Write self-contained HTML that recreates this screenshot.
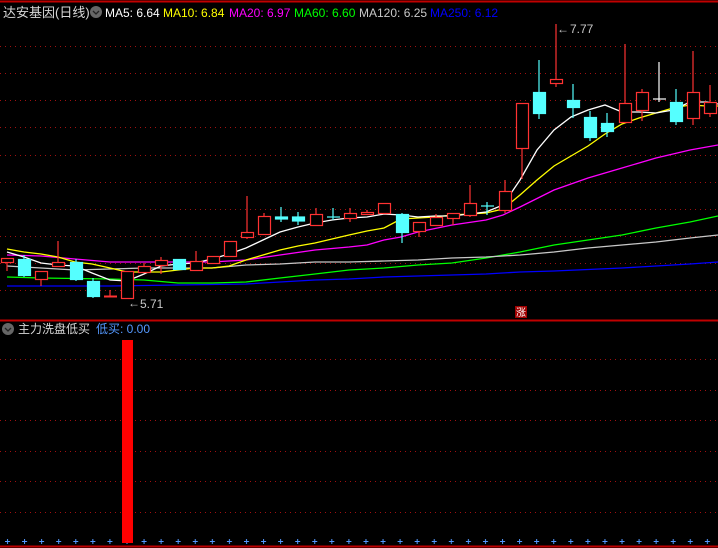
<!DOCTYPE html>
<html><head><meta charset="utf-8"><style>
html,body{margin:0;padding:0;background:#000;width:718px;height:548px;overflow:hidden}
svg{display:block}
text{font-family:"Liberation Sans","Noto Sans CJK SC",sans-serif}
</style></head><body>
<svg width="718" height="548" viewBox="0 0 718 548" xmlns="http://www.w3.org/2000/svg">
<defs>
<pattern id="plus" x="5" y="539" width="17.07" height="5" patternUnits="userSpaceOnUse">
<rect x="0" y="2" width="5" height="1" fill="#5599ff"/><rect x="2" y="0" width="1" height="5" fill="#5599ff"/>
</pattern>
</defs>
<rect width="718" height="548" fill="#000"/>
<line x1="0" y1="1.5" x2="718" y2="1.5" stroke="#c00000" stroke-width="2"/>
<g stroke="#a01010" stroke-width="1" stroke-dasharray="1,4">
<line x1="0" y1="46.5" x2="718" y2="46.5"/><line x1="0" y1="73.5" x2="718" y2="73.5"/>
<line x1="0" y1="100.5" x2="718" y2="100.5"/><line x1="0" y1="127.5" x2="718" y2="127.5"/>
<line x1="0" y1="155.5" x2="718" y2="155.5"/><line x1="0" y1="182.5" x2="718" y2="182.5"/>
<line x1="0" y1="209.5" x2="718" y2="209.5"/><line x1="0" y1="236.5" x2="718" y2="236.5"/>
<line x1="0" y1="263.5" x2="718" y2="263.5"/><line x1="0" y1="290.5" x2="718" y2="290.5"/>
<line x1="0" y1="359.5" x2="718" y2="359.5"/><line x1="0" y1="390.5" x2="718" y2="390.5"/>
<line x1="0" y1="420.5" x2="718" y2="420.5"/><line x1="0" y1="451.5" x2="718" y2="451.5"/>
<line x1="0" y1="481.5" x2="718" y2="481.5"/><line x1="0" y1="512.5" x2="718" y2="512.5"/>
</g>
<line x1="0" y1="320.5" x2="718" y2="320.5" stroke="#c00000" stroke-width="2"/>
<line x1="0" y1="546.5" x2="718" y2="546.5" stroke="#c00000" stroke-width="2"/>

<g fill="none" stroke-width="1.3">
<polyline stroke="#0000ff" points="7,286 41,286 110,286 178,285 246,284 280,282 315,280 349,279 384,277 452,275 486,274 520,272 554,271 622,268 690,264 718,262"/>
<polyline stroke="#00ff00" points="7,277 41,278 110,279 144,280 178,283 212,283 246,282 280,278 315,274 349,270 384,268 418,265 452,263 486,258 520,252 554,245 588,240 622,235 656,228 690,222 718,216"/>
<polyline stroke="#c8c8c8" points="7,266 41,268 75,270 110,269 144,268 178,268 212,268 246,265 280,264 315,262 349,262 384,261 418,260 452,258 486,257 520,255 554,252 588,248 622,245 656,242 690,238 718,235"/>
<polyline stroke="#ff00ff" points="7,255 41,256 75,259 110,262 144,262 178,262 212,262 246,260 280,255 315,250 349,247 367,245 384,240 401,237 418,232 452,225 486,220 503,215 520,207 554,190 588,178 622,168 656,158 690,150 718,145"/>
<polyline stroke="#ffff00" points="7,249 24,252 41,254 58,257 75,262 92,264 110,268 127,272 144,272 161,272 178,270 195,268 212,268 229,266 246,260 263,255 280,250 298,246 315,243 332,239 349,235 367,231 384,228 401,219 418,218 435,217 452,215 469,214 486,213 503,209 520,195 537,180 554,166 571,156 588,146 605,134 622,124 639,118 656,113 673,108 690,105 707,106 718,106"/>
<polyline stroke="#ffffff" points="7,252 24,257 41,263 58,265 75,266 92,273 110,280 127,281 144,274 161,266 178,264 195,263 212,259 229,254 246,248 263,240 280,232 298,227 315,223 332,220 349,218 367,217 384,214 401,215 418,217 435,216 452,216 469,214 486,212 503,205 520,180 537,150 554,130 571,117 588,110 605,105 622,112 639,112 656,113 673,110 690,102 707,102 718,104"/>
</g>

<g stroke-width="1.2">
<g stroke="#ff3232" fill="#000">
<line x1="7" y1="258" x2="7" y2="271"/><rect x="1.5" y="258.5" width="12" height="4"/>
<line x1="41" y1="279" x2="41" y2="286"/><rect x="35.5" y="271.5" width="12" height="8"/>
<line x1="58" y1="241" x2="58" y2="267"/><rect x="52.5" y="262.5" width="12" height="4"/>
<line x1="110" y1="290" x2="110" y2="297"/><line x1="104" y1="296.5" x2="117" y2="296.5" stroke-width="2"/>
<rect x="121.5" y="271.5" width="12" height="27"/>
<line x1="144" y1="263" x2="144" y2="272"/><rect x="138.5" y="266.5" width="12" height="6"/>
<line x1="161" y1="257" x2="161" y2="274"/><rect x="155.5" y="260.5" width="12" height="5"/>
<line x1="196" y1="251" x2="196" y2="271"/><rect x="190.5" y="261.5" width="12" height="9"/>
<rect x="207.5" y="256.5" width="12" height="7"/>
<rect x="224.5" y="241.5" width="12" height="15"/>
<line x1="247" y1="196" x2="247" y2="239"/><rect x="241.5" y="232.5" width="12" height="5"/>
<line x1="264" y1="213" x2="264" y2="234"/><rect x="258.5" y="216.5" width="12" height="18"/>
<line x1="316" y1="208" x2="316" y2="225"/><rect x="310.5" y="214.5" width="12" height="11"/>
<line x1="350" y1="208" x2="350" y2="222"/><rect x="344.5" y="213.5" width="12" height="5"/>
<line x1="367" y1="210" x2="367" y2="214"/><rect x="361.5" y="212.5" width="12" height="2"/>
<rect x="378.5" y="203.5" width="12" height="10"/>
<line x1="419" y1="231" x2="419" y2="237"/><rect x="413.5" y="222.5" width="12" height="9"/>
<line x1="436" y1="214" x2="436" y2="225"/><rect x="430.5" y="217.5" width="12" height="8"/>
<line x1="453" y1="214" x2="453" y2="225"/><rect x="447.5" y="213.5" width="12" height="5"/>
<line x1="470" y1="185" x2="470" y2="217"/><rect x="464.5" y="203.5" width="12" height="12"/>
<line x1="505" y1="180" x2="505" y2="213"/><rect x="499.5" y="191.5" width="12" height="19"/>
<line x1="522" y1="148" x2="522" y2="179"/><rect x="516.5" y="103.5" width="12" height="45"/>
<line x1="556" y1="24" x2="556" y2="87"/><rect x="550.5" y="79.5" width="12" height="4"/>
<line x1="625" y1="44" x2="625" y2="122"/><rect x="619.5" y="103.5" width="12" height="19"/>
<line x1="642" y1="89" x2="642" y2="121"/><rect x="636.5" y="92.5" width="12" height="18"/>
<line x1="693" y1="51" x2="693" y2="125"/><rect x="687.5" y="92.5" width="12" height="26"/>
<line x1="710" y1="85" x2="710" y2="117"/><rect x="704.5" y="102.5" width="12" height="11"/>
</g>
<g stroke="#55ffff" fill="#55ffff">
<line x1="24" y1="255" x2="24" y2="277"/><rect x="18.5" y="259.5" width="12" height="16"/>
<line x1="76" y1="259" x2="76" y2="281"/><rect x="70.5" y="262.5" width="12" height="17"/>
<line x1="93" y1="278" x2="93" y2="298"/><rect x="87.5" y="281.5" width="12" height="15"/>
<rect x="173.5" y="259.5" width="12" height="10"/>
<line x1="281" y1="207" x2="281" y2="222"/><rect x="275.5" y="217" width="12" height="2"/>
<line x1="298" y1="212" x2="298" y2="225"/><rect x="292.5" y="217" width="12" height="4"/>
<line x1="333" y1="208" x2="333" y2="220"/><line x1="327" y1="217" x2="340" y2="217"/>
<line x1="402" y1="213" x2="402" y2="243"/><rect x="396.5" y="214.5" width="12" height="18"/>
<line x1="487" y1="202" x2="487" y2="215"/><line x1="481" y1="206" x2="494" y2="206"/>
<line x1="539" y1="60" x2="539" y2="119"/><rect x="533.5" y="92.5" width="12" height="21"/>
<line x1="573" y1="84" x2="573" y2="118"/><rect x="567.5" y="100.5" width="12" height="7"/>
<line x1="590" y1="111" x2="590" y2="141"/><rect x="584.5" y="117.5" width="12" height="20"/>
<line x1="607" y1="113" x2="607" y2="137"/><rect x="601.5" y="123.5" width="12" height="8"/>
<line x1="676" y1="89" x2="676" y2="125"/><rect x="670.5" y="102.5" width="12" height="19"/>
</g>
<g stroke="#fff"><line x1="659" y1="62" x2="659" y2="102"/><line x1="653" y1="99" x2="666" y2="99"/></g>
</g>

<text x="128" y="307" fill="#c8c8c8" font-size="12">←</text>
<text x="140" y="308" fill="#c8c8c8" font-size="12">5.71</text>
<text x="557" y="33" fill="#c8c8c8" font-size="12">←</text>
<text x="570" y="33" fill="#c8c8c8" font-size="12">7.77</text>
<rect x="515" y="306" width="12" height="12" fill="#a00000"/>
<text x="516" y="316" fill="#fff" font-size="10">涨</text>

<text x="3" y="17" fill="#d8d8d8" font-size="13">达安基因(日线)</text>
<circle cx="96" cy="12" r="6" fill="#666"/><path d="M93 11 L96 14 L99 11" stroke="#222" fill="none" stroke-width="1.3"/>
<g font-size="12">
<text x="105" y="17" fill="#fff">MA5: 6.64</text>
<text x="163" y="17" fill="#ffff00">MA10: 6.84</text>
<text x="229" y="17" fill="#ff00ff">MA20: 6.97</text>
<text x="294" y="17" fill="#00ff00">MA60: 6.60</text>
<text x="359" y="17" fill="#c8c8c8">MA120: 6.25</text>
<text x="430" y="17" fill="#0000ff">MA250: 6.12</text>
</g>
<circle cx="8" cy="329" r="6" fill="#666"/><path d="M5 328 L8 331 L11 328" stroke="#222" fill="none" stroke-width="1.3"/>
<text x="18" y="333" fill="#d8d8d8" font-size="12">主力洗盘低买</text>
<text x="96" y="333" fill="#5599ff" font-size="12">低买: 0.00</text>

<rect x="5" y="539" width="713" height="5" fill="url(#plus)"/>
<rect x="122" y="340" width="11" height="203" fill="#ff0000"/>
</svg>
</body></html>
